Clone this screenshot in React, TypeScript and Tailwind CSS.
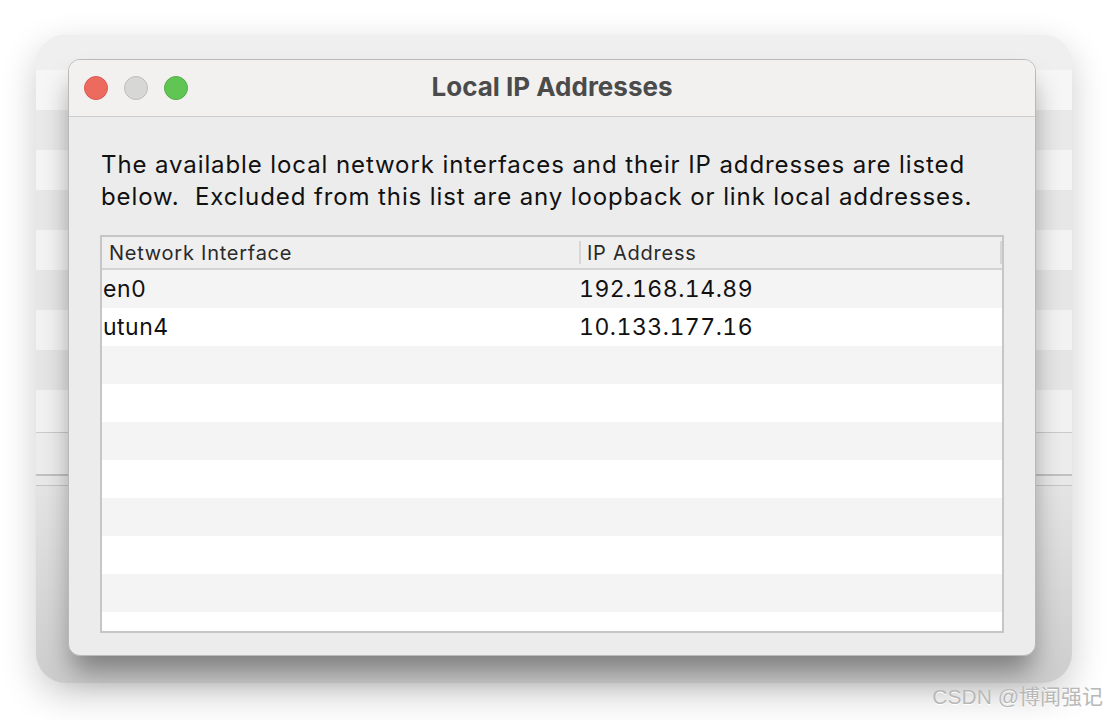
import React from "react";

const rows = [
  { name: "en0", ip: "192.168.14.89" },
  { name: "utun4", ip: "10.133.177.16" },
  { name: "", ip: "" },
  { name: "", ip: "" },
  { name: "", ip: "" },
  { name: "", ip: "" },
  { name: "", ip: "" },
  { name: "", ip: "" },
  { name: "", ip: "" },
  { name: "", ip: "" },
];

const stripes = ["bg-[#f6f6f6]", "bg-[#e9e9e9]", "bg-[#f4f4f4]", "bg-[#e7e7e7]", "bg-[#f3f3f3]", "bg-[#e6e6e6]", "bg-[#f2f2f2]", "bg-[#e5e5e5]"];

function BackWindow() {
  return (
    <div className="pt-[35px] pl-[36px]">
      <div className="w-[1036px] h-[648px] rounded-[30px] overflow-hidden flex flex-col bg-[#e6e6e6] shadow-[0_12px_36px_rgba(0,0,0,0.2)]">
        <div className="h-[35px] bg-[#efefef]" />
        {stripes.map((c, i) => (
          <div key={i} className={`h-[40px] ${c}`} />
        ))}
        <div className="h-[43px] bg-[#f1f1f1] border-b border-[#cacaca]" />
        <div className="h-[43px] bg-[#ececec] border-b-2 border-[#c0c0c0]" />
        <div className="h-[10px] bg-[#e8e8e8] border-b border-[#c4c4c4]" />
        <div className="flex-1 bg-gradient-to-b from-[#e4e4e4] to-[#cdcdcd]" />
      </div>
    </div>
  );
}

function TrafficLights() {
  return (
    <div className="flex items-center gap-[16px]">
      <span className="w-[24px] h-[24px] rounded-full bg-[#ed6a5e] border border-[#d85a4f]" />
      <span className="w-[24px] h-[24px] rounded-full bg-[#d7d7d5] border border-[#bdbdbb]" />
      <span className="w-[24px] h-[24px] rounded-full bg-[#61c554] border border-[#52ad46]" />
    </div>
  );
}

function AddressTable() {
  return (
    <div className="h-[398px] border-2 border-[#c6c6c6] bg-white flex flex-col overflow-hidden">
      <div className="h-[33px] shrink-0 bg-[#efefef] border-b-2 border-[#d3d3d3] flex items-center text-[20px] tracking-[0.75px] text-[#2a2a2a]">
        <div className="w-[477px] pl-[7px]">Network Interface</div>
        <div className="w-[2px] h-[23px] bg-[#d6d6d6]" />
        <div className="flex-1 pl-[6px]">IP Address</div>
        <div className="w-[2px] h-[23px] bg-[#d6d6d6]" />
      </div>
      <div className="flex-1 overflow-hidden">
        {rows.map((r, i) => (
          <div
            key={i}
            className={`h-[38px] shrink-0 flex items-center text-[23px] tracking-[0.5px] tabular-nums text-[#111] ${i % 2 === 0 ? "bg-[#f4f4f4]" : "bg-white"}`}
          >
            <div className="w-[477px] pl-[1px]">{r.name}</div>
            <div className="flex-1">{r.ip}</div>
          </div>
        ))}
      </div>
    </div>
  );
}

function Dialog() {
  return (
    <div className="absolute left-[68px] top-[59px] w-[968px] h-[597px] rounded-[12px] border border-[#b9b9b9] bg-[#ececec] overflow-hidden flex flex-col shadow-[0_20px_28px_-4px_rgba(0,0,0,0.4)]">
      <div className="relative h-[57px] shrink-0 bg-[#f2f1f0] border-b border-[#cdcdcd] flex items-center px-[15px]">
        <TrafficLights />
        <div className="absolute inset-0 pb-[3px] flex items-center justify-center text-[26px] font-bold text-[#4b4b4b]">
          Local IP Addresses
        </div>
      </div>
      <div className="flex-1 flex flex-col px-[31px] pt-[32px]">
        <p className="text-[24px] leading-[32px] tracking-[0.9px] text-[#111] pl-[1px]">
          The available local network interfaces and their IP addresses are listed
          <br />
          below.&nbsp; Excluded from this list are any loopback or link local addresses.
        </p>
        <div className="mt-[22px]">
          <AddressTable />
        </div>
      </div>
    </div>
  );
}

export default function App() {
  return (
    <div className="relative w-[1108px] h-[720px] bg-white overflow-hidden font-['Inter',sans-serif]">
      <BackWindow />
      <Dialog />
      <div className="absolute right-[5px] bottom-[8px] text-[21px] text-[#b8b8b8] font-['Liberation_Sans','Noto_Sans_CJK_SC',sans-serif] [text-shadow:0_1px_0_#fff]">
        CSDN @博闻强记
      </div>
    </div>
  );
}
